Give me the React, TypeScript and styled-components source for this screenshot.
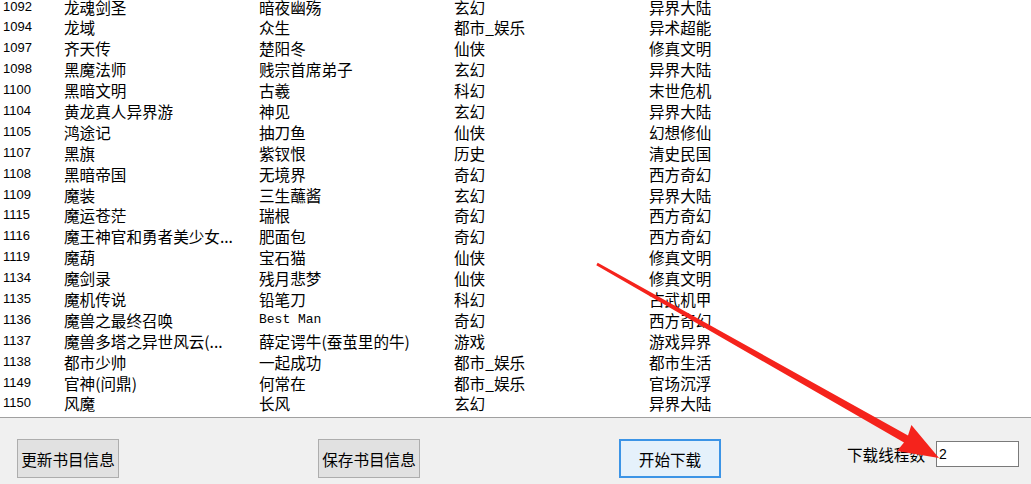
import React from "react";
import styled, { createGlobalStyle } from "styled-components";

const GlobalStyle = createGlobalStyle`
  html, body {
    margin: 0;
    padding: 0;
    background: #f0f0f0;
    overflow: hidden;
  }
`;

const cjk = `"Noto Sans CJK SC", "Noto Sans", sans-serif`;
const rowHeight = 20.9;

interface Book {
  id: string;
  name: string;
  author: string;
  type: string;
  subtype: string;
}

const books: Book[] = [
  { id: "1092", name: "龙魂剑圣", author: "暗夜幽殇", type: "玄幻", subtype: "异界大陆" },
  { id: "1094", name: "龙域", author: "众生", type: "都市_娱乐", subtype: "异术超能" },
  { id: "1097", name: "齐天传", author: "楚阳冬", type: "仙侠", subtype: "修真文明" },
  { id: "1098", name: "黑魔法师", author: "贱宗首席弟子", type: "玄幻", subtype: "异界大陆" },
  { id: "1100", name: "黑暗文明", author: "古羲", type: "科幻", subtype: "末世危机" },
  { id: "1104", name: "黄龙真人异界游", author: "神见", type: "玄幻", subtype: "异界大陆" },
  { id: "1105", name: "鸿途记", author: "抽刀鱼", type: "仙侠", subtype: "幻想修仙" },
  { id: "1107", name: "黑旗", author: "紫钗恨", type: "历史", subtype: "清史民国" },
  { id: "1108", name: "黑暗帝国", author: "无境界", type: "奇幻", subtype: "西方奇幻" },
  { id: "1109", name: "魔装", author: "三生蘸酱", type: "玄幻", subtype: "异界大陆" },
  { id: "1115", name: "魔运苍茫", author: "瑞根", type: "奇幻", subtype: "西方奇幻" },
  { id: "1116", name: "魔王神官和勇者美少女...", author: "肥面包", type: "奇幻", subtype: "西方奇幻" },
  { id: "1119", name: "魔葫", author: "宝石猫", type: "仙侠", subtype: "修真文明" },
  { id: "1134", name: "魔剑录", author: "残月悲梦", type: "仙侠", subtype: "修真文明" },
  { id: "1135", name: "魔机传说", author: "铅笔刀", type: "科幻", subtype: "古武机甲" },
  { id: "1136", name: "魔兽之最终召唤", author: "Best Man", type: "奇幻", subtype: "西方奇幻" },
  { id: "1137", name: "魔兽多塔之异世风云(...", author: "薛定谔牛(蚕茧里的牛)", type: "游戏", subtype: "游戏异界" },
  { id: "1138", name: "都市少帅", author: "一起成功", type: "都市_娱乐", subtype: "都市生活" },
  { id: "1149", name: "官神(问鼎)", author: "何常在", type: "都市_娱乐", subtype: "官场沉浮" },
  { id: "1150", name: "风魔", author: "长风", type: "玄幻", subtype: "异界大陆" },
  { id: "1151", name: "都市修真者", author: "风流书呆子", type: "仙侠", subtype: "都市异能" },
];

const Window = styled.div`
  position: relative;
  width: 1031px;
  height: 484px;
  display: flex;
  flex-direction: column;
  background: #f0f0f0;
`;

const List = styled.div`
  height: 417px;
  flex: none;
  background: #ffffff;
  border-bottom: 1px solid #a0a0a0;
  overflow: hidden;
`;

const Rows = styled.div`
  margin-top: -3.5px;
`;

const Row = styled.div`
  display: grid;
  grid-template-columns: 61px 195px 195px 195px 1fr;
  padding-left: 3px;
  height: ${rowHeight}px;
  line-height: ${rowHeight}px;
  color: #000;
  white-space: nowrap;
`;

const IdCell = styled.span`
  font-family: "Liberation Sans", Arial, sans-serif;
  font-size: 13px;
`;

const Cell = styled.span<{ $mono?: boolean }>`
  font-family: ${({ $mono }) => ($mono ? `"Liberation Mono", monospace` : cjk)};
  font-size: ${({ $mono }) => ($mono ? "13px" : "15.6px")};
  overflow: hidden;
`;

const Footer = styled.div`
  flex: 1;
  display: flex;
  align-items: flex-start;
  padding: 21px 0 0 17px;
`;

const Button = styled.button<{ $active?: boolean; $gap: number }>`
  width: 102px;
  height: 39px;
  margin-right: ${({ $gap }) => $gap}px;
  padding: 0;
  flex: none;
  font-family: ${cjk};
  font-size: 15.6px;
  color: #000;
  background: ${({ $active }) => ($active ? "#e5f1fb" : "#e1e1e1")};
  border: 1px solid ${({ $active }) => ($active ? "#3c94e6" : "#adadad")};
  border-radius: 0;
  outline: ${({ $active }) => ($active ? "1px solid #3c94e6" : "none")};
  outline-offset: -2px;
`;

const ThreadGroup = styled.div`
  display: flex;
  align-items: center;
  flex: none;
  margin-top: 2px;
  margin-left: 4px;
  gap: 11px;
`;

const Label = styled.span`
  flex: none;
  white-space: nowrap;
  font-family: ${cjk};
  font-size: 15.6px;
  color: #000;
`;

const Input = styled.input`
  flex: none;
  width: 77px;
  height: 24px;
  box-sizing: content-box;
  padding: 0 2px;
  border: 1px solid #7a7a7a;
  background: #fff;
  font-family: "Liberation Sans", Arial, sans-serif;
  font-size: 14px;
  color: #000;
  outline: none;
`;

const Annotation = styled.svg`
  position: absolute;
  left: 0;
  top: 0;
  pointer-events: none;
`;

const isLatin = (s: string) => /^[A-Za-z ]+$/.test(s);

export default function App() {
  return (
    <>
      <GlobalStyle />
      <Window>
        <List>
          <Rows>
            {books.map((b) => (
              <Row key={b.id}>
                <IdCell>{b.id}</IdCell>
                <Cell>{b.name}</Cell>
                <Cell $mono={isLatin(b.author)}>{b.author}</Cell>
                <Cell>{b.type}</Cell>
                <Cell>{b.subtype}</Cell>
              </Row>
            ))}
          </Rows>
        </List>
        <Footer>
          <Button $gap={199}>更新书目信息</Button>
          <Button $gap={199}>保存书目信息</Button>
          <Button $gap={122} $active>
            开始下载
          </Button>
          <ThreadGroup>
            <Label>下载线程数</Label>
            <Input defaultValue="2" />
          </ThreadGroup>
        </Footer>
        <Annotation width="1031" height="484" viewBox="0 0 1031 484">
          <polygon
            fill="#f5231c"
            points="597.7,262.7 908,435.5 911.4,425 939,458 897,451 904,442.5 596.3,265.3"
          />
        </Annotation>
      </Window>
    </>
  );
}
